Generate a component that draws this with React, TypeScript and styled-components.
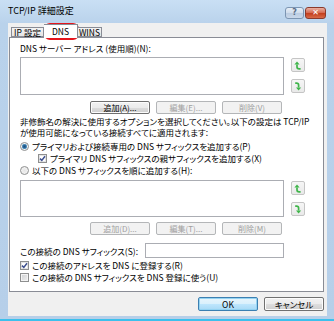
import React from 'react';
import styled, { createGlobalStyle } from 'styled-components';

const GlobalStyle = createGlobalStyle`
  html, body {
    margin: 0;
    padding: 0;
  }
  body {
    font-family: "Noto Sans CJK JP", "Liberation Sans", sans-serif;
    font-feature-settings: "palt";
    color: #000;
  }
`;

const Frame = styled.div`
  position: relative;
  width: 334px;
  height: 321px;
  box-sizing: border-box;
  display: flex;
  flex-direction: column;
  background: linear-gradient(#c9dff4, #b9d2eb 24px, #b6cfe9);
  border-bottom: 2px solid #3cc0ec;
  overflow: hidden;
`;

const TitleBar = styled.div`
  height: 23px;
  flex: none;
  display: flex;
  align-items: center;
  padding: 0 8px;
  box-sizing: border-box;
`;

const Title = styled.span`
  font-size: 9px;
  white-space: nowrap;
  flex: 1;
  margin-top: -2px;
`;

const Controls = styled.div`
  display: flex;
  gap: 1px;
  align-self: flex-start;
  margin-top: 7px;
`;

const CaptionButton = styled.div<{ $close?: boolean }>`
  width: ${p => (p.$close ? 21 : 19)}px;
  height: 12px;
  box-sizing: border-box;
  border: 1px solid ${p => (p.$close ? '#8a3a2c' : '#7c95b2')};
  border-radius: 3px;
  background: ${p =>
    p.$close
      ? 'linear-gradient(#eab1a3, #d66d55 45%, #c4401f 55%, #d86a48)'
      : 'linear-gradient(#e6eef7, #d2deec 45%, #bccde2 55%, #c9d8ea)'};
  display: flex;
  align-items: center;
  justify-content: center;
  font-family: "DejaVu Sans", sans-serif;
  font-weight: bold;
  font-size: 8px;
  line-height: 1;
  color: ${p => (p.$close ? '#fff' : '#5b6f88')};
`;

const Client = styled.div`
  flex: 1;
  margin: 0 7px 3px 8px;
  background: #f0f0f0;
  display: flex;
  flex-direction: column;
`;

const TabStrip = styled.div`
  height: 14px;
  flex: none;
  display: flex;
  align-items: flex-end;
  padding-left: 3px;
  position: relative;
  z-index: 1;
`;

const Tab = styled.div<{ $active?: boolean; $w: number }>`
  width: ${p => p.$w}px;
  height: ${p => (p.$active ? 14 : 10)}px;
  box-sizing: border-box;
  border: 1px solid #898c95;
  border-bottom: ${p => (p.$active ? 'none' : '1px solid #898c95')};
  margin-bottom: ${p => (p.$active ? -1 : 0)}px;
  background: ${p => (p.$active ? '#fff' : 'linear-gradient(#f3f3f3, #e5e5e5)')};
  font-size: 8.5px;
  line-height: 1;
  display: flex;
  justify-content: center;
  align-items: ${p => (p.$active ? 'flex-start' : 'center')};
  padding-top: ${p => (p.$active ? 2 : 0)}px;
  white-space: nowrap;
  & + & {
    border-left: none;
  }
`;

const Panel = styled.div`
  height: 255px;
  flex: none;
  box-sizing: border-box;
  margin: 0 3px 0 1px;
  border: 1px solid #898c95;
  background: #fff;
  padding: 0 0 0 10px;
  display: flex;
  flex-direction: column;
`;

const Label = styled.div<{ $mt?: number }>`
  font-size: 8.5px;
  line-height: 12px;
  height: 12px;
  margin-top: ${p => p.$mt ?? 0}px;
  white-space: nowrap;
`;

const Desc = styled.div`
  margin-top: 2px;
  font-size: 8.5px;
  line-height: 11px;
  white-space: nowrap;
`;

const ListRow = styled.div<{ $mt: number; $h: number }>`
  display: flex;
  margin-top: ${p => p.$mt}px;
  height: ${p => p.$h}px;
`;

const ListBox = styled.div`
  width: 264px;
  height: 100%;
  box-sizing: border-box;
  border: 1px solid #abadb3;
  background: #fff;
`;

const SideButtons = styled.div`
  display: flex;
  flex-direction: column;
  gap: 7px;
  margin-left: 7px;
  padding-top: 1px;
`;

const ArrowButton = styled.div`
  width: 14px;
  height: 14px;
  box-sizing: border-box;
  border: 1px solid #c5c5c5;
  border-radius: 2px;
  background: linear-gradient(#f6f6f6, #e9e9e9);
  display: flex;
  align-items: center;
  justify-content: center;
`;

const ButtonRow = styled.div<{ $mt: number }>`
  display: flex;
  gap: 6px;
  margin-top: ${p => p.$mt}px;
  padding-left: 70px;
`;

const Button = styled.div<{ $disabled?: boolean; $default?: boolean }>`
  width: 60px;
  height: 13px;
  box-sizing: border-box;
  border: 1px solid ${p => (p.$default ? '#3c7fb1' : p.$disabled ? '#b4b6b8' : '#707070')};
  border-radius: 2px;
  background: ${p =>
    p.$default
      ? 'linear-gradient(#e8f5fc, #d9f0fc 50%, #bee6fd 51%, #a7d9f5)'
      : p.$disabled
      ? '#f2f2f2'
      : 'linear-gradient(#f2f2f2, #ebebeb 50%, #dddddd 51%, #cfcfcf)'};
  box-shadow: ${p => (p.$default ? 'inset 0 0 0 1px #94d3f2' : p.$disabled ? 'none' : 'inset 0 0 0 1px #fcfcfc')};
  color: ${p => (p.$disabled ? '#a0a0a0' : '#000')};
  font-size: 8px;
  line-height: 1;
  display: flex;
  align-items: center;
  justify-content: center;
  white-space: nowrap;
`;

const Option = styled.div<{ $indent?: number; $mt?: number }>`
  display: flex;
  align-items: center;
  gap: 3px;
  height: 12px;
  margin-left: ${p => p.$indent ?? 0}px;
  margin-top: ${p => p.$mt ?? 0}px;
  font-size: 8.5px;
  line-height: 12px;
  white-space: nowrap;
`;

const Radio = styled.span<{ $on?: boolean }>`
  width: 9px;
  height: 9px;
  box-sizing: border-box;
  border-radius: 50%;
  border: 1px solid #8e8f8f;
  background: ${p =>
    p.$on
      ? 'radial-gradient(circle, #1f4f7c 0, #2b6a9e 1.6px, #7fb6d8 2.6px, #f4f4f4 3px)'
      : 'radial-gradient(circle, #e6e6e6, #f7f7f7)'};
  flex: none;
`;

const Check = styled.span<{ $on?: boolean }>`
  width: 9px;
  height: 9px;
  box-sizing: border-box;
  border: 1px solid #8e8f8f;
  background: ${p => (p.$on ? '#fff' : 'linear-gradient(135deg, #cfd0d2, #f0f0f0)')};
  box-shadow: ${p => (p.$on ? 'inset 0 0 0 1px #e4e4e4' : 'inset 0 0 0 1px #f4f4f4')};
  display: flex;
  align-items: center;
  justify-content: center;
  flex: none;
`;

const SuffixRow = styled.div`
  display: flex;
  align-items: center;
  margin-top: 8px;
  height: 15px;
  font-size: 8.5px;
  white-space: nowrap;
`;

const SuffixLabel = styled.span`
  width: 125px;
  flex: none;
`;

const TextField = styled.div`
  width: 139px;
  height: 15px;
  box-sizing: border-box;
  border: 1px solid #abadb3;
  background: #fff;
`;

const Footer = styled.div`
  display: flex;
  justify-content: flex-end;
  gap: 6px;
  padding: 5px 3px 0 0;
`;

const DialogButton = styled(Button)`
  height: 14px;
  font-size: 8.5px;
`;

const Highlight = styled.div`
  position: absolute;
  left: 44px;
  top: 23px;
  width: 35px;
  height: 17px;
  box-sizing: border-box;
  border: 2px solid #e5151c;
  border-radius: 6px;
  pointer-events: none;
`;

const UpIcon = () => (
  <svg width="8" height="9" viewBox="0 0 8 9">
    <path d="M3 0.4 L0.4 3.6 H5.6 Z" fill="#3fb54a" />
    <path d="M3 3.4 V6 Q3 7.9 5.2 7.9 H6.6" fill="none" stroke="#3fb54a" strokeWidth="1.7" />
  </svg>
);

const DownIcon = () => (
  <svg width="8" height="9" viewBox="0 0 8 9">
    <path d="M1.2 1.1 H2.6 Q4.6 1.1 4.6 3 V5.6" fill="none" stroke="#3fb54a" strokeWidth="1.7" />
    <path d="M4.6 8.6 L2 5.4 H7.2 Z" fill="#3fb54a" />
  </svg>
);

const CheckMark = () => (
  <svg width="7" height="7" viewBox="0 0 7 7">
    <path d="M1 3.6 L2.8 5.4 L6 1.2" fill="none" stroke="#3d4f8f" strokeWidth="1.5" />
  </svg>
);

const ListGroup = ({ mt, h, btnMt, labels, firstEnabled }: { mt: number; h: number; btnMt: number; labels: [string, string, string]; firstEnabled?: boolean; }) => (
  <>
    <ListRow $mt={mt} $h={h}>
      <ListBox />
      <SideButtons>
        <ArrowButton>
          <UpIcon />
        </ArrowButton>
        <ArrowButton>
          <DownIcon />
        </ArrowButton>
      </SideButtons>
    </ListRow>
    <ButtonRow $mt={btnMt}>
      <Button $disabled={!firstEnabled}>{labels[0]}</Button>
      <Button $disabled>{labels[1]}</Button>
      <Button $disabled>{labels[2]}</Button>
    </ButtonRow>
  </>
);

export default function App() {
  return (
    <>
      <GlobalStyle />
      <Frame>
        <TitleBar>
          <Title>TCP/IP 詳細設定</Title>
          <Controls>
            <CaptionButton>?</CaptionButton>
            <CaptionButton $close>✕</CaptionButton>
          </Controls>
        </TitleBar>
        <Client>
          <TabStrip>
            <Tab $w={33}>IP 設定</Tab>
            <Tab $w={34} $active>DNS</Tab>
            <Tab $w={24}>WINS</Tab>
          </TabStrip>
          <Panel>
            <Label $mt={4}>DNS サーバー アドレス (使用順)(N):</Label>
            <ListGroup mt={3} h={38} btnMt={6} firstEnabled labels={['追加(A)...', '編集(E)...', '削除(V)']} />
            <Desc>
              非修飾名の解決に使用するオプションを選択してください。以下の設定は TCP/IP
              <br />
              が使用可能になっている接続すべてに適用されます:
            </Desc>
            <Option $mt={2}>
              <Radio $on />
              プライマリおよび接続専用の DNS サフィックスを追加する(P)
            </Option>
            <Option $indent={18}>
              <Check $on>
                <CheckMark />
              </Check>
              プライマリ DNS サフィックスの親サフィックスを追加する(X)
            </Option>
            <Option>
              <Radio />
              以下の DNS サフィックスを順に追加する(H):
            </Option>
            <ListGroup mt={4} h={37} btnMt={5} labels={['追加(D)...', '編集(T)...', '削除(M)']} />
            <SuffixRow>
              <SuffixLabel>この接続の DNS サフィックス(S):</SuffixLabel>
              <TextField />
            </SuffixRow>
            <Option $mt={1}>
              <Check $on>
                <CheckMark />
              </Check>
              この接続のアドレスを DNS に登録する(R)
            </Option>
            <Option>
              <Check />
              この接続の DNS サフィックスを DNS 登録に使う(U)
            </Option>
          </Panel>
          <Footer>
            <DialogButton $default>OK</DialogButton>
            <DialogButton>キャンセル</DialogButton>
          </Footer>
        </Client>
        <Highlight />
      </Frame>
    </>
  );
}
